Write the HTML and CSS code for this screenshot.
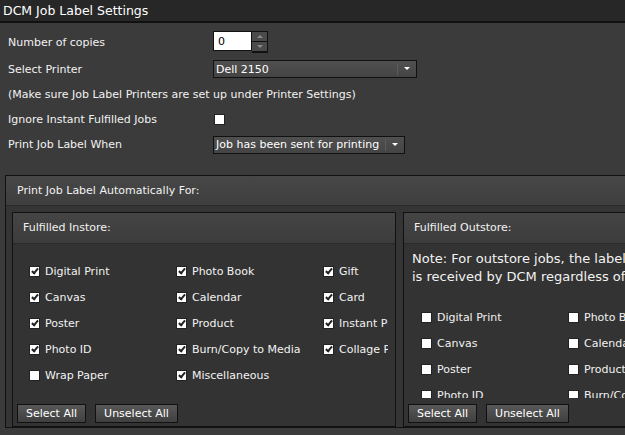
FILE: index.html
```html
<!DOCTYPE html>
<html lang="en">
<head>
    <meta charset="UTF-8">
    <title>DCM Job Label Settings</title>
    <link rel="stylesheet" href="styles.css">
</head>
<body>

<div class="titlebar">DCM Job Label Settings</div>

<div class="settings">
    <div class="row first">
        <label>Number of copies</label>
        <div class="spinner">
            <input type="text" value="0">
            <div class="spin-btns">
                <span class="spin up"></span>
                <span class="spin down"></span>
            </div>
        </div>
    </div>
    <div class="row second">
        <label>Select Printer</label>
        <div class="dropdown printer"><span>Dell 2150</span><i class="arrow"></i></div>
    </div>
    <div class="row note">(Make sure Job Label Printers are set up under Printer Settings)</div>
    <div class="row">
        <label>Ignore Instant Fulfilled Jobs</label>
        <span class="box"></span>
    </div>
    <div class="row">
        <label>Print Job Label When</label>
        <div class="dropdown when"><span>Job has been sent for printing</span><i class="arrow"></i></div>
    </div>
</div>

<div class="auto-panel">
    <div class="auto-header">Print Job Label Automatically For:</div>
    <div class="auto-body">

        <div class="group instore">
            <div class="group-header">Fulfilled Instore:</div>
            <div class="group-body">
                <div class="checks">
                    <div class="check"><span class="box on"></span>Digital Print</div>
                    <div class="check"><span class="box on"></span>Photo Book</div>
                    <div class="check"><span class="box on"></span>Gift</div>
                    <div class="check"><span class="box on"></span>Canvas</div>
                    <div class="check"><span class="box on"></span>Calendar</div>
                    <div class="check"><span class="box on"></span>Card</div>
                    <div class="check"><span class="box on"></span>Poster</div>
                    <div class="check"><span class="box on"></span>Product</div>
                    <div class="check"><span class="box on"></span>Instant Print</div>
                    <div class="check"><span class="box on"></span>Photo ID</div>
                    <div class="check"><span class="box on"></span>Burn/Copy to Media</div>
                    <div class="check"><span class="box on"></span>Collage Print</div>
                    <div class="check"><span class="box"></span>Wrap Paper</div>
                    <div class="check"><span class="box on"></span>Miscellaneous</div>
                </div>
                <div class="buttons">
                    <button>Select All</button>
                    <button>Unselect All</button>
                </div>
            </div>
        </div>

        <div class="group outstore">
            <div class="group-header">Fulfilled Outstore:</div>
            <div class="group-body">
                <div class="scroll">
                    <p class="outnote">Note: For outstore jobs, the label will be printed as soon as the order<br>is received by DCM regardless of its status.</p>
                    <div class="checks">
                        <div class="check"><span class="box"></span>Digital Print</div>
                        <div class="check"><span class="box"></span>Photo Book</div>
                        <div class="check"><span class="box"></span>Gift</div>
                        <div class="check"><span class="box"></span>Canvas</div>
                        <div class="check"><span class="box"></span>Calendar</div>
                        <div class="check"><span class="box"></span>Card</div>
                        <div class="check"><span class="box"></span>Poster</div>
                        <div class="check"><span class="box"></span>Product</div>
                        <div class="check"><span class="box"></span>Instant Print</div>
                        <div class="check"><span class="box"></span>Photo ID</div>
                        <div class="check"><span class="box"></span>Burn/Copy to Media</div>
                        <div class="check"><span class="box"></span>Collage Print</div>
                    </div>
                </div>
                <div class="buttons">
                    <button>Select All</button>
                    <button>Unselect All</button>
                </div>
            </div>
        </div>

    </div>
</div>

</body>
</html>
```

FILE: styles.css
```css
body {
    margin: 0;
    width: 625px;
    height: 435px;
    overflow: hidden;
    background-color: #3b3b3b;
    color: #f2f2f2;
    font-family: "DejaVu Sans", Verdana, sans-serif;
    font-size: 11px;
}
.titlebar {
    height: 21px;
    line-height: 21px;
    padding-left: 3px;
    background-color: #272727;
    border-bottom: 2px solid #111;
    font-size: 12.5px;
    color: #fff;
}
.settings {
    padding: 5px 0 0 8px;
}
.row {
    display: flex;
    align-items: center;
    height: 25px;
}
.row.first {
    height: 28px;
}
.row.second {
    height: 26px;
}
.row label {
    width: 205px;
}
.spinner {
    display: flex;
    height: 22px;
}
.spinner input {
    width: 33px;
    height: 18px;
    padding: 0 0 0 4px;
    border: 1px solid #111;
    background: #fff;
    color: #000;
    font-family: inherit;
    font-size: 11px;
    outline: none;
}
.spin-btns {
    display: flex;
    flex-direction: column;
    gap: 1px;
    background: #111;
    border: 1px solid #111;
    border-left: none;
}
.spin {
    width: 15px;
    height: 9px;
    background: #4a4a4a;
    position: relative;
}
.spin::after {
    content: "";
    position: absolute;
    left: 5px;
    top: 3px;
    border-left: 3px solid transparent;
    border-right: 3px solid transparent;
}
.spin.up::after {
    border-bottom: 3px solid #8a8a8a;
}
.spin.down::after {
    border-top: 3px solid #8a8a8a;
}
.dropdown {
    display: flex;
    align-items: center;
    justify-content: space-between;
    height: 16px;
    padding-left: 2px;
    border: 1px solid #111;
    background: linear-gradient(#505050, #444);
    color: #fff;
}
.dropdown.printer {
    width: 200px;
}
.dropdown.when {
    width: 188px;
}
.arrow {
    width: 18px;
    height: 12px;
    border-left: 1px solid #5c5c5c;
    position: relative;
}
.arrow::after {
    content: "";
    position: absolute;
    left: 6px;
    top: 4px;
    border-left: 3px solid transparent;
    border-right: 3px solid transparent;
    border-top: 3px solid #fff;
}
.box {
    display: inline-block;
    flex: none;
    width: 9px;
    height: 9px;
    border: 1px solid #222;
    background: #fff;
    position: relative;
}
.row .box {
    margin-left: 1px;
}
.box.on::after {
    content: "";
    position: absolute;
    left: 3px;
    top: 0px;
    width: 2px;
    height: 5px;
    border: solid #222;
    border-width: 0 2px 2px 0;
    transform: rotate(40deg);
}
.auto-panel {
    margin: 18px 0 0 5px;
    width: 700px;
    border: 1px solid #111;
    background: #353535;
}
.auto-header {
    height: 29px;
    line-height: 29px;
    padding-left: 11px;
    background: linear-gradient(#474747, #3e3e3e);
    border-bottom: 1px solid #2a2a2a;
}
.auto-body {
    display: flex;
    gap: 7px;
    padding: 6px 0 0 6px;
}
.group {
    flex: none;
    width: 382px;
    border: 1px solid #111;
    background: #333;
}
.group-header {
    height: 30px;
    line-height: 30px;
    padding-left: 10px;
    background: linear-gradient(#454545, #3c3c3c);
    border-bottom: 1px solid #2a2a2a;
}
.group-body {
    box-sizing: border-box;
    height: 182px;
    display: flex;
    flex-direction: column;
    justify-content: space-between;
    padding: 0 0 3px 4px;
}
.checks {
    display: grid;
    grid-template-columns: 147px 147px 65px;
    grid-auto-rows: 26px;
    padding-left: 12px;
    overflow: hidden;
}
.instore .checks {
    padding-top: 14px;
}
.check {
    display: flex;
    align-items: center;
    gap: 5px;
    white-space: nowrap;
    overflow: hidden;
}
.scroll {
    height: 154px;
    overflow: hidden;
}
.outnote {
    margin: 6px 0 18px 4px;
    white-space: nowrap;
    font-size: 13px;
    line-height: 18px;
}
.outstore .checks {
    padding-left: 13px;
}
.buttons {
    display: flex;
    gap: 9px;
}
button {
    height: 19px;
    padding: 0 8px;
    border: 1px solid #111;
    background: linear-gradient(#585858, #3f3f3f);
    color: #fff;
    font-family: inherit;
    font-size: 11px;
}
```
